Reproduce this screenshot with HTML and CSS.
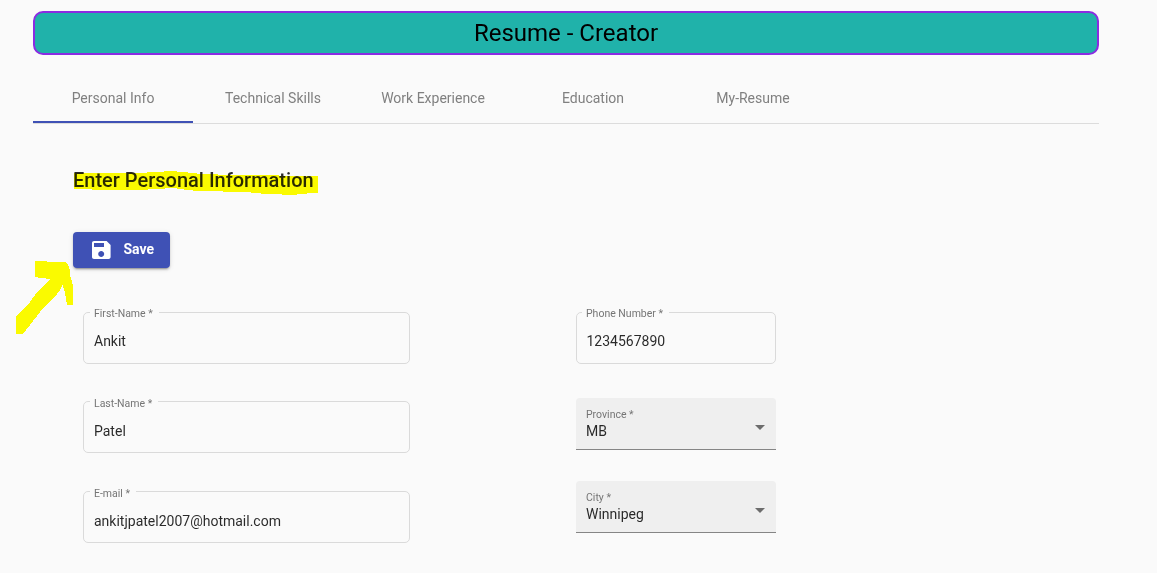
FILE: index.html
```html
<!DOCTYPE html>
<html lang="en">
<head>
<meta charset="utf-8">
<title>Resume - Creator</title>
<link rel="stylesheet" href="styles.css">
</head>
<body>
<div class="page">
  <header class="banner"><span class="banner-title">Resume - Creator</span></header>
  <nav class="tabs">
    <a class="tab active">Personal Info</a>
    <a class="tab">Technical Skills</a>
    <a class="tab">Work Experience</a>
    <a class="tab">Education</a>
    <a class="tab">My-Resume</a>
  </nav>
  <main class="content">
    <h2 class="heading"><span class="heading-text">Enter Personal Information</span></h2>
    <button class="save">
      <svg class="save-icon" viewBox="0 0 24 24"><path fill="currentColor" d="M17 3H5c-1.110 0-2 .9-2 2v14c0 1.100.890 2 2 2h14.600c1.100 0 2-.9 2-2V7l-4-4zm-4.800 16c-1.660 0-3-1.340-3-3s1.340-3 3-3 3 1.340 3 3-1.340 3-3 3zm2.800-10H5V5h10v4z"/></svg>
      <span class="save-label">Save</span>
    </button>
    <form class="form">
      <div class="column wide">
        <fieldset class="outline first"><legend class="legend">First-Name *</legend><div class="value">Ankit</div></fieldset>
        <fieldset class="outline"><legend class="legend shifted">Last-Name *</legend><div class="value low">Patel</div></fieldset>
        <fieldset class="outline last"><legend class="legend shifted">E-mail *</legend><div class="value low">ankitjpatel2007@hotmail.com</div></fieldset>
      </div>
      <div class="column narrow">
        <fieldset class="outline phone"><legend class="legend">Phone Number *</legend><div class="value">1234567890</div></fieldset>
        <div class="select province"><div class="select-text"><span class="select-label">Province *</span><span class="select-value">MB</span></div><span class="caret"></span></div>
        <div class="select"><div class="select-text"><span class="select-label">City *</span><span class="select-value">Winnipeg</span></div><span class="caret"></span></div>
      </div>
    </form>
  </main>
  <svg class="marker" viewBox="0 0 1157 573" shape-rendering="crispEdges">
    <path d="M74 173H147V172H164V171H177V172H188V173L205 174L230 175H275L283 176H318V193H312L297 194.500H282V194L261 193.500L246 192L223 191.500L197 191L184 189.500L173 188L148 189.500H92V189H74Z"/>
    <path d="M35 261H47V262H65L68 265L70 270V275L72 282L73 285V305H67L65 293L62.500 285L60 290L57 294L46 305L40 312L30 325L23 334H16V317L30 302L37 292L50 280V279L41 278L35 277Z"/>
  </svg>
</div>
</body>
</html>
```
FILE: styles.css
```css
* { box-sizing: border-box; }
body { margin: 0; background: #fafafa; font-family: Roboto, sans-serif; color: rgba(0,0,0,.84); }
.page { position: relative; height: 573px; padding: 11px 58px 0 33px; overflow: hidden; }
.banner { height: 44px; display: flex; justify-content: center; border: 2px solid blueviolet; border-radius: 10px; background: lightseagreen; color: #000; font-size: 24px; line-height: 40px; }
.banner-title { letter-spacing: 0; }
.tabs { display: flex; height: 49px; margin-top: 20px; border-bottom: 1px solid #dcdcdc; }
.tab { width: 160px; height: 48px; line-height: 46px; text-align: center; font-size: 14px; font-weight: 450; color: #808080; }
.active { border-bottom: 2px solid #3f51b5; }
.content { padding: 40px 40px 0; }
.heading { margin: 0; font-size: 20px; font-weight: 500; line-height: 32px; }
.save { display: flex; align-items: center; width: 97px; height: 36px; margin: 36px 0 0; padding: 0 14px 0 16px; border: 0; border-radius: 4px; background: #3f51b5; color: #fff; font: 700 14px/36px Roboto, sans-serif; box-shadow: 0 3px 1px -2px rgba(0,0,0,.2), 0 2px 2px rgba(0,0,0,.14), 0 1px 5px rgba(0,0,0,.12); }
.save-icon { flex: none; width: 24px; height: 24px; }
.save-label { margin-left: 10.5px; position: relative; top: -1px; }
.form { display: flex; padding: 38px 10px 0; gap: 166px; }
.column { display: flex; flex-direction: column; }
.wide { width: 327px; }
.narrow { width: 200px; }
.outline { height: 58px; min-width: 0; margin: 0; padding: 0 10px 0 6px; border: 1px solid #dadada; border-radius: 5px; }
.first { margin-bottom: 31px; }
.last { margin-top: 32px; }
.legend { height: 13px; padding: 1px 6px 0 4px; font-size: 10.5px; line-height: 13px; color: #757575; }
.shifted { padding-top: 2px; }
.value { padding: 14px 0 0 4px; font-size: 14px; line-height: 16px; }
.low { padding-top: 15px; }
.phone { margin-bottom: 34px; padding-left: 5px; }
.phone .value { padding-left: 4.5px; }
.select { display: flex; justify-content: space-between; height: 52px; padding: 9px 11px 0 10px; border-bottom: 1px solid #858585; border-radius: 4px 4px 0 0; background: #efefef; }
.province { margin-bottom: 31px; }
.select-text { display: flex; flex-direction: column; }
.select-label { font-size: 10.5px; line-height: 15px; color: #757575; }
.select-value { font-size: 14px; line-height: 19px; }
.caret { width: 0; height: 0; margin-top: 18px; border: 5px solid transparent; border-top-color: #6c6c6c; border-bottom: 0; }
.marker { position: absolute; left: 0; top: 0; width: 1157px; height: 573px; fill: #ff0; mix-blend-mode: multiply; pointer-events: none; }
```
